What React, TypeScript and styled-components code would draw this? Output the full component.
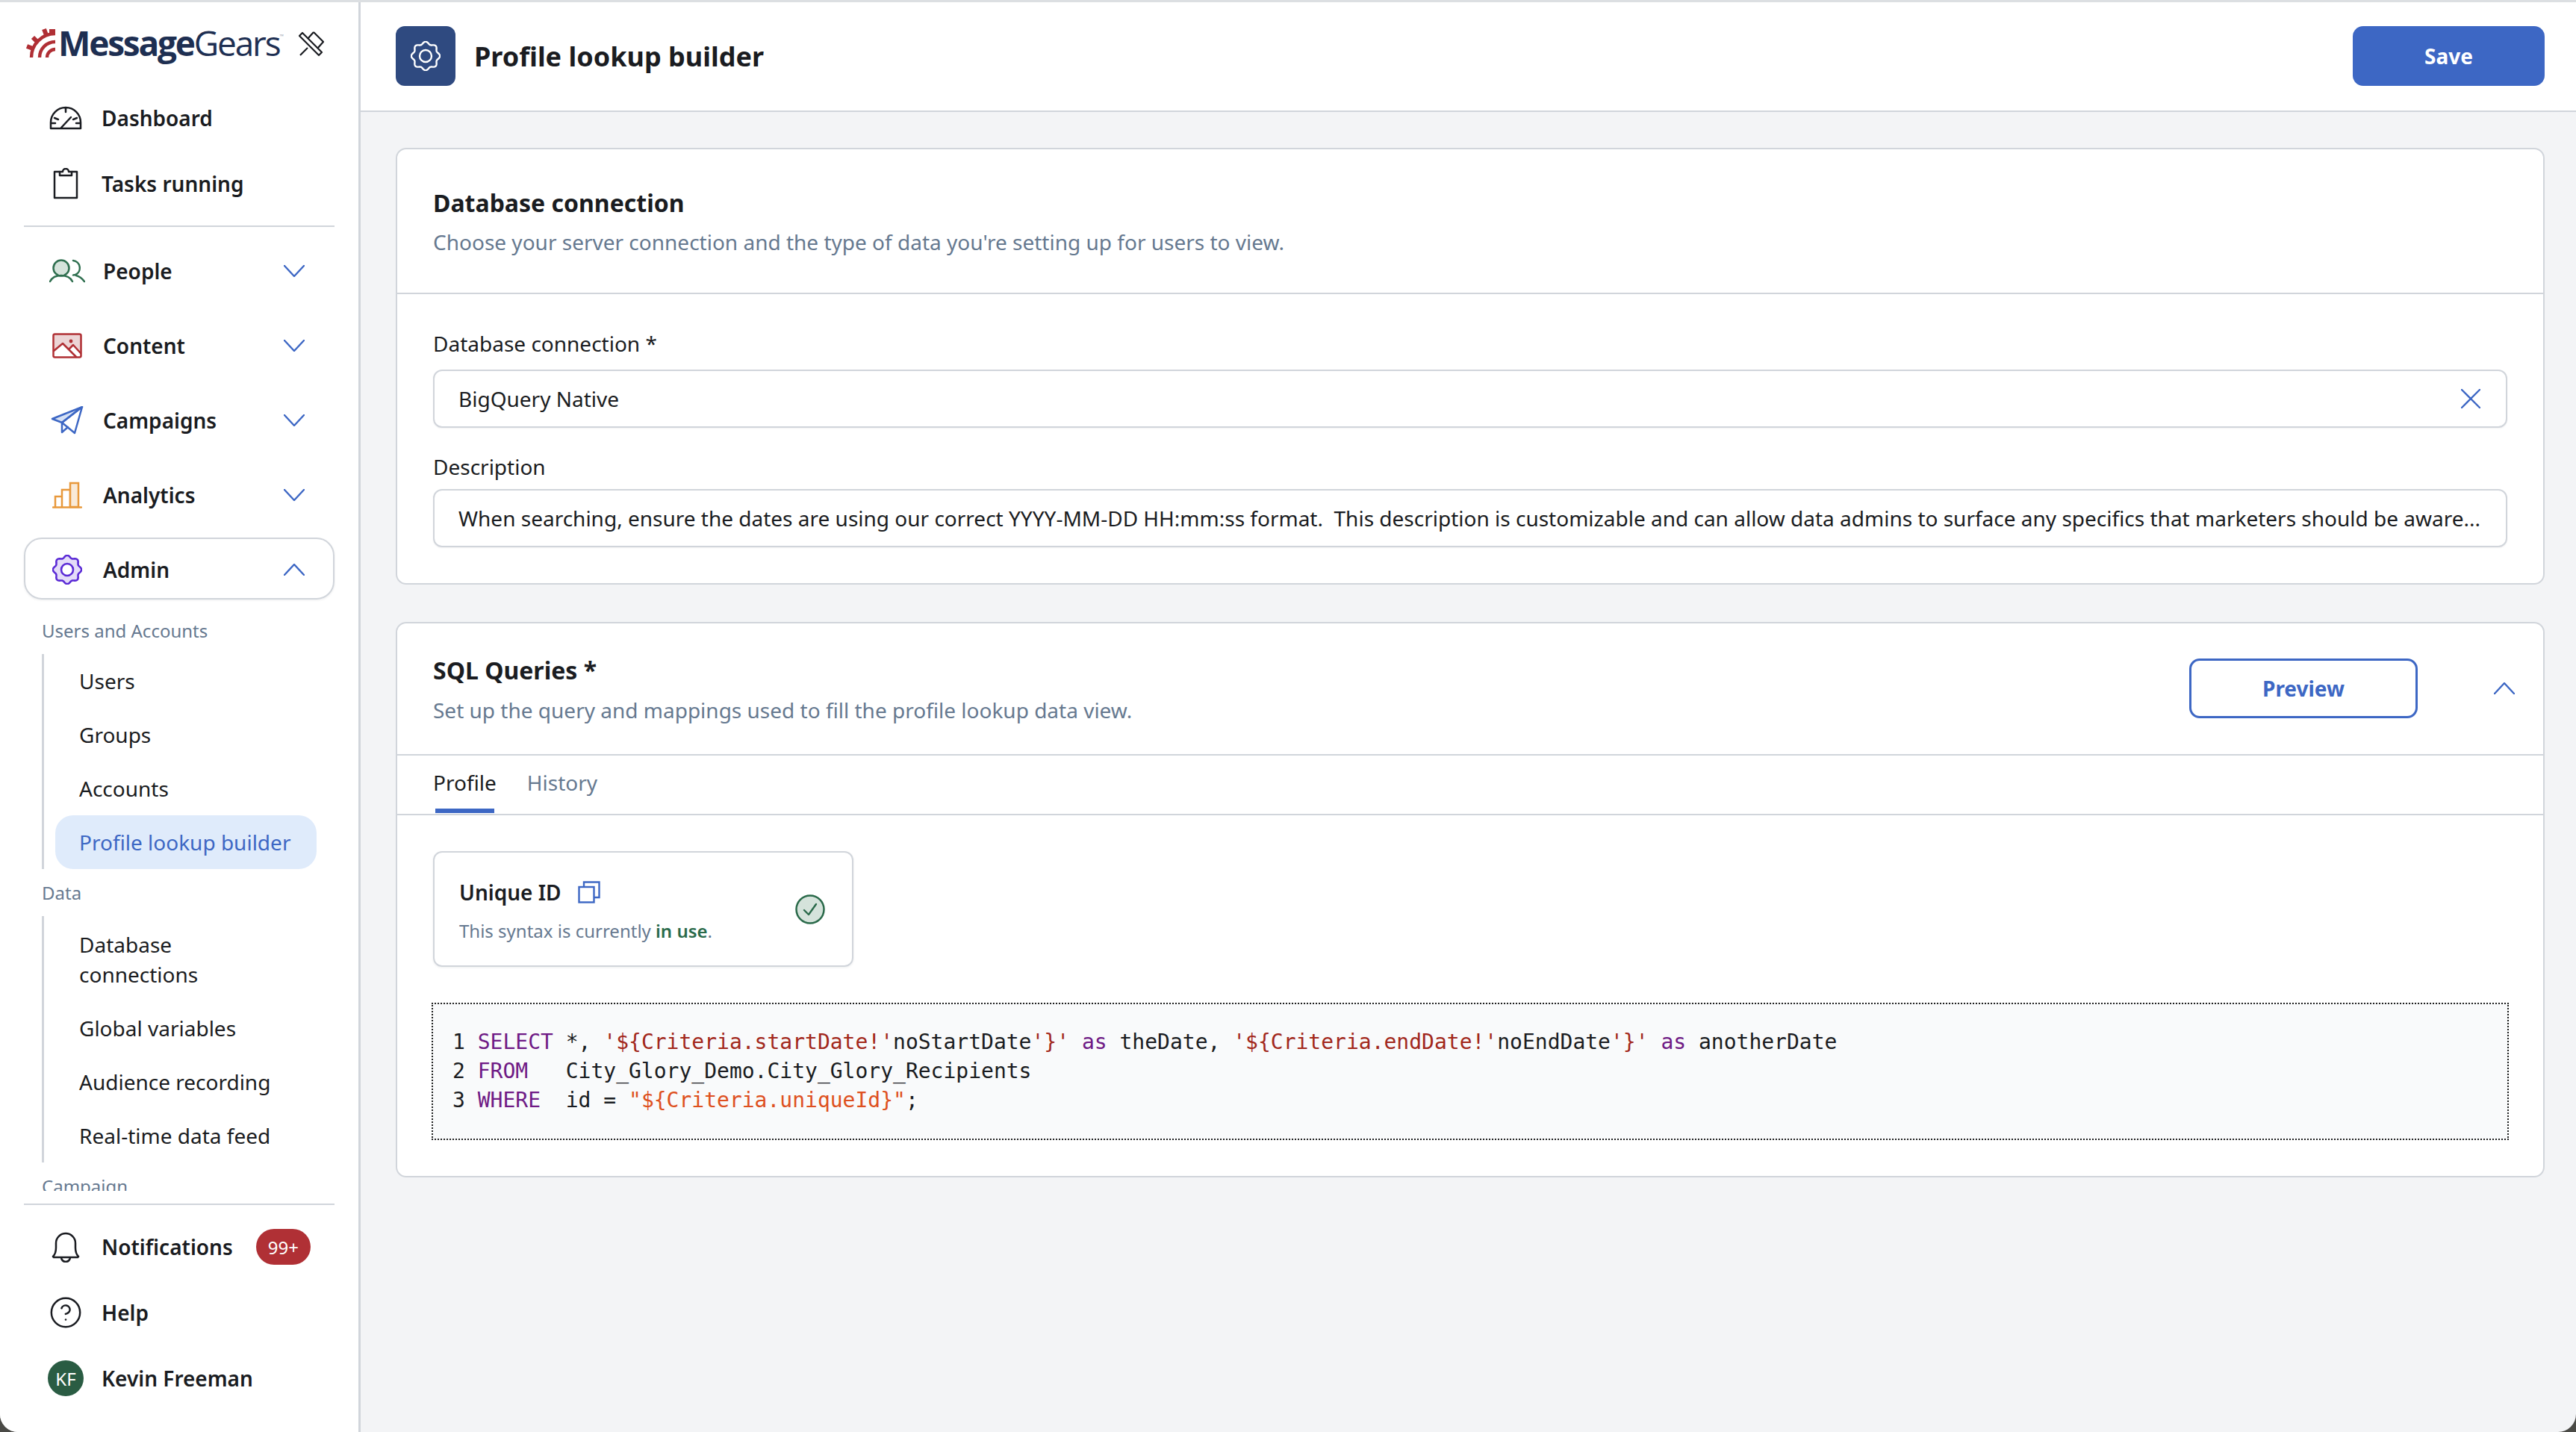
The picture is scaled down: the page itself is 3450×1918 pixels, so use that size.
import React from "react";
import styled, { createGlobalStyle } from "styled-components";
import { CircleHelp } from "lucide-react";

const GlobalStyle = createGlobalStyle`
    html, body {
        margin: 0;
        padding: 0;
        background: #4a4a46;
        overflow: hidden;
    }
    * {
        box-sizing: border-box;
    }
`;

const Page = styled.div`
    display: flex;
    width: 3450px;
    height: 1918px;
    font-family: "Noto Sans", sans-serif;
    color: #1a1c21;
    background: #f3f4f6;
    border-top: 3px solid #dcdfe2;
    border-bottom-left-radius: 24px;
    border-bottom-right-radius: 24px;
    overflow: hidden;
`;

// sidebar
const Sidebar = styled.aside`
    display: flex;
    flex-direction: column;
    flex: 0 0 483px;
    height: 100%;
    background: #fff;
    border-right: 3px solid #d1d5db;
`;
const LogoRow = styled.div`
    display: flex;
    align-items: center;
    height: 111px;
    padding: 0 0 4px 32px;
`;
const LogoText = styled.div`
    margin-left: 4px;
    font-family: "Open Sans", sans-serif;
    font-size: 46px;
    line-height: 50px;
    letter-spacing: -2.2px;
    color: #1e2f52;
    white-space: nowrap;
`;
const LogoStrong = styled.span`
    font-weight: 700;
`;
const LogoMark = styled.sup`
    font-size: 7px;
    letter-spacing: 0;
    color: #9aa3b2;
    vertical-align: 24px;
    line-height: 0;
`;
const PinButton = styled.div`
    display: flex;
    margin-left: 20px;
    margin-top: 4px;
`;
const PlainRow = styled.div`
    display: flex;
    align-items: center;
    gap: 24px;
    height: 88px;
    padding-left: 64px;
    font-size: 28px;
    font-weight: 600;
`;
const RowStack = styled.div`
    display: flex;
    flex-direction: column;
`;
const IconSlot = styled.span`
    display: flex;
    align-items: center;
    justify-content: center;
    flex: 0 0 48px;
    width: 48px;
    height: 48px;
`;
const Divider = styled.div<{ $top: number }>`
    flex: none;
    height: 2px;
    margin: ${({ $top }) => $top}px 32px 0;
    background: #d1d5db;
`;
const Groups = styled.div`
    display: flex;
    flex-direction: column;
    gap: 20px;
    margin-top: 19px;
`;
const Group = styled.div<{ $open?: boolean }>`
    display: flex;
    align-items: center;
    gap: 24px;
    height: ${({ $open }) => ($open ? "83px" : "80px")};
    margin: ${({ $open }) => ($open ? "-3px 32px 0" : "0 32px")};
    padding: ${({ $open }) => ($open ? "3px 38px 0 32px" : "0 40px 0 34px")};
    font-size: 28px;
    font-weight: 600;
    border: ${({ $open }) => ($open ? "2px solid #d1d5db" : "none")};
    border-radius: 24px;
    box-shadow: ${({ $open }) => ($open ? "0 1px 3px rgba(16, 24, 40, 0.08)" : "none")};
`;
const GroupLabel = styled.span`
    flex: 1;
`;
const Scroller = styled.div`
    flex: 0 0 792px;
    height: 792px;
    overflow: hidden;
`;
const SectionLabel = styled.div<{ $top: number }>`
    margin: ${({ $top }) => $top}px 0 0 56px;
    font-size: 24px;
    line-height: 34px;
    color: #667990;
`;
const Tree = styled.div`
    display: flex;
    flex-direction: column;
    margin: 14px 0 0 56px;
    padding-left: 15px;
    border-left: 3px solid #d1d5db;
`;
const TreeItem = styled.div<{ $active?: boolean; $wrap?: boolean }>`
    width: 350px;
    padding: ${({ $wrap }) => ($wrap ? "18px 90px 16px 32px" : "16px 32px")};
    font-size: 28px;
    line-height: 40px;
    border-radius: 24px;
    color: ${({ $active }) => ($active ? "#3d67c4" : "#1a1c21")};
    background: ${({ $active }) => ($active ? "#dfebfb" : "transparent")};
`;
const Badge = styled.span`
    display: flex;
    align-items: center;
    justify-content: center;
    width: 73px;
    height: 48px;
    margin-left: 7px;
    font-size: 24px;
    font-weight: 400;
    color: #fff;
    background: #b03035;
    border-radius: 24px;
`;
const Avatar = styled.span`
    display: flex;
    align-items: center;
    justify-content: center;
    width: 48px;
    height: 48px;
    font-size: 24px;
    font-weight: 400;
    color: #fff;
    background: #2a5c43;
    border-radius: 50%;
`;
const BottomNav = styled(RowStack)`
    margin-top: 12px;
`;

// main column
const Main = styled.main`
    display: flex;
    flex-direction: column;
    flex: 1;
    min-width: 0;
`;
const Header = styled.header`
    display: flex;
    align-items: center;
    flex: 0 0 147px;
    padding: 0 42px 2px 47px;
    background: #fff;
    border-bottom: 2px solid #d1d5db;
`;
const HeaderIcon = styled.div`
    display: flex;
    align-items: center;
    justify-content: center;
    width: 80px;
    height: 80px;
    background: #2f4a80;
    border-radius: 12px;
`;
const PageTitle = styled.h1`
    flex: 1;
    margin: 2px 0 0 25px;
    font-size: 36px;
    font-weight: 700;
    line-height: 48px;
`;
const SaveButton = styled.button`
    width: 257px;
    height: 80px;
    font-family: inherit;
    font-size: 28px;
    font-weight: 700;
    color: #fff;
    background: #3d67c4;
    border: none;
    border-radius: 14px;
`;
const PreviewButton = styled(SaveButton)`
    width: 306px;
    color: #3d67c4;
    background: #fff;
    border: 3px solid #3d67c4;
`;
const Content = styled.div`
    display: flex;
    flex-direction: column;
    gap: 50px;
    padding: 48px 42px 0 47px;
`;
const Card = styled.section`
    background: #fff;
    border: 2px solid #d1d5db;
    border-radius: 14px;
`;
const CardHead = styled.div<{ $pad: string }>`
    display: flex;
    align-items: center;
    padding: ${({ $pad }) => $pad};
    border-bottom: 2px solid #d1d5db;
`;
const CardHeadText = styled.div`
    flex: 1;
`;
const CardTitle = styled.h2`
    margin: 0;
    font-size: 32px;
    font-weight: 700;
    line-height: 44px;
`;
const CardSub = styled.p<{ $gap: number }>`
    margin: ${({ $gap }) => $gap}px 0 0;
    font-size: 28px;
    line-height: 38px;
    color: #667990;
`;
const HeadActions = styled.div`
    display: flex;
    align-items: center;
    gap: 102px;
    margin-top: -2px;
`;
const FormBody = styled.div`
    padding: 47px 48px 48px 48px;
`;
const FieldLabel = styled.label<{ $top?: number }>`
    display: block;
    margin-top: ${({ $top }) => $top ?? 0}px;
    font-size: 28px;
    line-height: 38px;
`;
const InputBox = styled.div<{ $top: number }>`
    display: flex;
    align-items: center;
    justify-content: space-between;
    height: 78px;
    margin-top: ${({ $top }) => $top}px;
    padding: 0 34px 0 32px;
    font-size: 28px;
    white-space: pre;
    overflow: hidden;
    background: #fff;
    border: 2px solid #d1d5db;
    border-radius: 12px;
    box-shadow: 0 1px 2px rgba(16, 24, 40, 0.06);
`;
const Tabs = styled.div`
    display: flex;
    gap: 41px;
    height: 80px;
    padding-left: 48px;
    border-bottom: 2px solid #d1d5db;
`;
const Tab = styled.div<{ $active?: boolean }>`
    position: relative;
    font-size: 28px;
    line-height: 72px;
    color: ${({ $active }) => ($active ? "#1a1c21" : "#667990")};
    &::after {
        content: "";
        display: ${({ $active }) => ($active ? "block" : "none")};
        position: absolute;
        left: 3px;
        right: 3px;
        bottom: 1px;
        height: 6px;
        background: #3d67c4;
    }
`;
const QueryBody = styled.div`
    padding: 48px 46px 48px 48px;
`;
const SyntaxCard = styled.div`
    display: flex;
    align-items: center;
    justify-content: space-between;
    width: 563px;
    height: 155px;
    padding: 0 36px 0 33px;
    border: 2px solid #d1d5db;
    border-radius: 12px;
    box-shadow: 0 1px 3px rgba(16, 24, 40, 0.08);
`;
const SyntaxText = styled.div`
    margin-top: 4px;
`;
const SyntaxTitle = styled.div`
    display: flex;
    align-items: center;
    gap: 22px;
    font-size: 28px;
    font-weight: 600;
    line-height: 38px;
`;
const SyntaxNote = styled.div`
    margin-top: 16px;
    font-size: 24px;
    line-height: 34px;
    color: #667990;
`;
const InUse = styled.span`
    font-weight: 600;
    color: #2a6a4a;
`;
const CodeBox = styled.pre`
    height: 184px;
    margin: 48px 0 0 -2px;
    padding: 31px 26px;
    font-family: "DejaVu Sans Mono", monospace;
    font-size: 28px;
    line-height: 39px;
    color: #1a1c21;
    background: #f9fafb;
    border: 2px dotted #222;
`;
const Kw = styled.span`
    color: #6f1a85;
`;
const Str = styled.span`
    color: #a2281c;
`;
const Dq = styled.span`
    color: #de5020;
`;

// icons
const gearPath = (c: number, mean: number, amp: number, lobes: number) => {
    const pts: string[] = [];
    for (let i = 0; i < 144; i++) {
        const t = (i / 144) * Math.PI * 2;
        const r = mean + amp * Math.cos(lobes * t);
        pts.push(`${(c + r * Math.sin(t)).toFixed(2)} ${(c - r * Math.cos(t)).toFixed(2)}`);
    }
    return `M${pts.join("L")}Z`;
};

const Gear = ({ size, stroke, fill, hole, width }: { size: number; stroke: string; fill: string; hole: string; width: number }) => {
    const c = size / 2;
    return (
        <svg width={size} height={size} viewBox={`0 0 ${size} ${size}`}>
            <path d={gearPath(c, size * 0.44, size * 0.04, 8)} fill={fill} stroke={stroke} strokeWidth={width} strokeLinejoin="round" />
            <circle cx={c} cy={c} r={size * 0.2} fill={hole} stroke={stroke} strokeWidth={width} />
        </svg>
    );
};

const Chevron = ({ up, width = 28 }: { up?: boolean; width?: number }) => (
    <svg width={width} height={16} viewBox="0 0 28 16" fill="none" stroke="#3d67c4" strokeWidth="2.4" strokeLinecap="round" strokeLinejoin="round">
        <path d={up ? "M1 15 14 1l13 14" : "M1 1l13 14L27 1"} />
    </svg>
);

const Logo = () => (
    <svg width="42" height="42" viewBox="0 0 42 42" fill="none" stroke="#b02f35" strokeWidth="4.4">
        <path d="M42 30a11 11 0 0 0-11 11" />
        <path d="M42 20a21 21 0 0 0-21 21" />
        <path d="M42 9a32 32 0 0 0-32 32" />
        <path d="M27 3l3 8M12 14l6 6M4 26l8 3M34 6l8 0" strokeWidth="6" />
    </svg>
);

const PinOff = () => (
    <svg width="34" height="34" viewBox="0 0 34 34" fill="none" stroke="#1a1c21" strokeWidth="2.2" strokeLinejoin="round">
        <path d="M20 1l13 13-8 9M20 1l-8 9" />
        <path d="M1 6l4-4 26 26-4 4zM12 22L2 32" />
    </svg>
);

const DashboardIcon = () => (
    <svg width="44" height="32" viewBox="0 0 44 32" fill="none" stroke="#1a1c21" strokeWidth="2.5" strokeLinecap="round" strokeLinejoin="round">
        <path d="M2 30v-8a20 20 0 0 1 40 0v8zM22 2v6M7 16l5 2M37 16l-5 2M2 23h6M36 23h6M16 29l13-14" />
    </svg>
);

const ClipboardIcon = () => (
    <svg width="34" height="42" viewBox="0 0 34 42" fill="none" stroke="#1a1c21" strokeWidth="2.5" strokeLinejoin="round">
        <path d="M9 5H2v35h30V5h-7" />
        <path d="M9 10V5h4a4 4 0 0 1 8 0h4v5z" />
    </svg>
);

const PeopleIcon = () => (
    <svg width="48" height="32" viewBox="0 0 48 32" fill="none" stroke="#2f6f4f" strokeWidth="2.5" strokeLinecap="round">
        <circle cx="16" cy="12" r="10.5" fill="#d5e3db" />
        <path d="M1 30c3-6 8-8 15-8s12 2 15 8" />
        <path d="M32 2a10 10 0 0 1 3 19c-1 0-2 0-3 .5M36 22c4 1 8 4 11 8" />
    </svg>
);

const ContentIcon = () => (
    <svg width="40" height="34" viewBox="0 0 40 34" strokeWidth="2.5" strokeLinejoin="round" strokeLinecap="round">
        <rect x="1.5" y="1.5" width="37" height="31" rx="2" fill="#ecd5d6" stroke="none" />
        <path d="M2 24l12-10 17 18H2zM22 21l6-5 10 11v5h-7z" fill="#fff" stroke="none" />
        <rect x="1.5" y="1.5" width="37" height="31" rx="2" fill="none" stroke="#b03035" />
        <path d="M2 24l12-10 18 18M22 22l6-6 10 11" fill="none" stroke="#b03035" />
        <circle cx="25" cy="11" r="2.4" fill="#b03035" />
    </svg>
);

const PlaneIcon = () => (
    <svg width="44" height="38" viewBox="0 0 44 38" strokeWidth="2.5" strokeLinejoin="round" strokeLinecap="round" stroke="#3d67c4">
        <path d="M42 1L2 17l13 5z" fill="#d6e1f5" />
        <path d="M42 1L32 36 15 22zM15 22v13l8-7" fill="none" />
    </svg>
);

const BarsIcon = () => (
    <svg width="40" height="36" viewBox="0 0 40 36" stroke="#e8993c" strokeWidth="2.5" fill="none" strokeLinecap="round">
        <path d="M1 34.5h38" />
        <path d="M4 34V20h9v14M13 20v-9h11v23" />
        <rect x="24" y="2" width="11" height="32" fill="#f9ead8" />
    </svg>
);

const BellIcon = () => (
    <svg width="38" height="42" viewBox="0 0 38 42" fill="none" stroke="#1a1c21" strokeWidth="2.5" strokeLinejoin="round">
        <path d="M2 34c3-3 4-6 4-12v-6a13 13 0 0 1 26 0v6c0 6 1 9 4 12l-1 1H3zM13 35a6 6 0 0 0 12 0" />
    </svg>
);

const CloseIcon = () => (
    <svg width="26" height="26" viewBox="0 0 26 26" fill="none" stroke="#3d67c4" strokeWidth="2.4" strokeLinecap="round">
        <path d="M1 1l24 24M25 1L1 25" />
    </svg>
);

const CopyIcon = () => (
    <svg width="30" height="30" viewBox="0 0 30 30" fill="none" stroke="#3d67c4" strokeWidth="2.4">
        <path d="M8 8V1.5h20.5V22H21" />
        <rect x="1.5" y="8" width="20" height="20.5" />
    </svg>
);

const CheckCircle = () => (
    <svg width="40" height="40" viewBox="0 0 40 40">
        <circle cx="20" cy="20" r="18.5" fill="#d5e3db" stroke="#2a6a4a" strokeWidth="2.5" />
        <path d="M12 21l6 6 10-14" fill="none" stroke="#2a6a4a" strokeWidth="2.4" strokeLinecap="round" strokeLinejoin="round" />
    </svg>
);

const NavGroup = ({ icon, label }: { icon: React.ReactNode; label: string }) => (
    <Group>
        <IconSlot>{icon}</IconSlot>
        <GroupLabel>{label}</GroupLabel>
        <Chevron />
    </Group>
);

export default function App() {
    return (
        <>
            <GlobalStyle />
            <Page>
                <Sidebar>
                    <LogoRow>
                        <Logo />
                        <LogoText>
                            <LogoStrong>Message</LogoStrong>Gears<LogoMark>™</LogoMark>
                        </LogoText>
                        <PinButton>
                            <PinOff />
                        </PinButton>
                    </LogoRow>
                    <RowStack>
                        <PlainRow>
                            <IconSlot><DashboardIcon /></IconSlot>
                            Dashboard
                        </PlainRow>
                        <PlainRow>
                            <IconSlot><ClipboardIcon /></IconSlot>
                            Tasks running
                        </PlainRow>
                    </RowStack>
                    <Divider $top={12} />
                    <Groups>
                        <NavGroup icon={<PeopleIcon />} label="People" />
                        <NavGroup icon={<ContentIcon />} label="Content" />
                        <NavGroup icon={<PlaneIcon />} label="Campaigns" />
                        <NavGroup icon={<BarsIcon />} label="Analytics" />
                        <Group $open>
                            <IconSlot>
                                <Gear size={40} stroke="#5b2bd6" fill="#e4dcf8" hole="#fff" width={2.6} />
                            </IconSlot>
                            <GroupLabel>Admin</GroupLabel>
                            <Chevron up />
                        </Group>
                    </Groups>
                    <Scroller>
                        <SectionLabel $top={25}>Users and Accounts</SectionLabel>
                        <Tree>
                            <TreeItem>Users</TreeItem>
                            <TreeItem>Groups</TreeItem>
                            <TreeItem>Accounts</TreeItem>
                            <TreeItem $active>Profile lookup builder</TreeItem>
                        </Tree>
                        <SectionLabel $top={15}>Data</SectionLabel>
                        <Tree>
                            <TreeItem $wrap>Database connections</TreeItem>
                            <TreeItem>Global variables</TreeItem>
                            <TreeItem>Audience recording</TreeItem>
                            <TreeItem>Real-time data feed</TreeItem>
                        </Tree>
                        <SectionLabel $top={15}>Campaign</SectionLabel>
                    </Scroller>
                    <Divider $top={17} />
                    <BottomNav>
                        <PlainRow>
                            <IconSlot><BellIcon /></IconSlot>
                            Notifications
                            <Badge>99+</Badge>
                        </PlainRow>
                        <PlainRow>
                            <IconSlot><CircleHelp size={46} strokeWidth={1.3} color="#1a1c21" /></IconSlot>
                            Help
                        </PlainRow>
                        <PlainRow>
                            <Avatar>KF</Avatar>
                            Kevin Freeman
                        </PlainRow>
                    </BottomNav>
                </Sidebar>
                <Main>
                    <Header>
                        <HeaderIcon>
                            <Gear size={40} stroke="#fff" fill="none" hole="none" width={2.4} />
                        </HeaderIcon>
                        <PageTitle>Profile lookup builder</PageTitle>
                        <SaveButton>Save</SaveButton>
                    </Header>
                    <Content>
                        <Card>
                            <CardHead $pad="50px 48px 49px">
                                <CardHeadText>
                                    <CardTitle>Database connection</CardTitle>
                                    <CardSub $gap={11}>Choose your server connection and the type of data you're setting up for users to view.</CardSub>
                                </CardHeadText>
                            </CardHead>
                            <FormBody>
                                <FieldLabel>Database connection *</FieldLabel>
                                <InputBox $top={16}>
                                    BigQuery Native
                                    <CloseIcon />
                                </InputBox>
                                <FieldLabel $top={33}>Description</FieldLabel>
                                <InputBox $top={11}>
                                    When searching, ensure the dates are using our correct YYYY-MM-DD HH:mm:ss format.  This description is customizable and can allow data admins to surface any specifics that marketers should be aware...
                                </InputBox>
                            </FormBody>
                        </Card>
                        <Card>
                            <CardHead $pad="41px 38px 40px 48px">
                                <CardHeadText>
                                    <CardTitle>SQL Queries *</CardTitle>
                                    <CardSub $gap={12}>Set up the query and mappings used to fill the profile lookup data view.</CardSub>
                                </CardHeadText>
                                <HeadActions>
                                    <PreviewButton>Preview</PreviewButton>
                                    <Chevron up />
                                </HeadActions>
                            </CardHead>
                            <Tabs>
                                <Tab $active>Profile</Tab>
                                <Tab>History</Tab>
                            </Tabs>
                            <QueryBody>
                                <SyntaxCard>
                                    <SyntaxText>
                                        <SyntaxTitle>
                                            Unique ID
                                            <CopyIcon />
                                        </SyntaxTitle>
                                        <SyntaxNote>
                                            This syntax is currently <InUse>in use</InUse>.
                                        </SyntaxNote>
                                    </SyntaxText>
                                    <CheckCircle />
                                </SyntaxCard>
                                <CodeBox>
                                    {"1 "}<Kw>SELECT</Kw>{" *, "}<Str>{"'${Criteria.startDate!'"}</Str>{"noStartDate"}<Str>{"'}'"}</Str>{" "}<Kw>as</Kw>{" theDate, "}<Str>{"'${Criteria.endDate!'"}</Str>{"noEndDate"}<Str>{"'}'"}</Str>{" "}<Kw>as</Kw>{" anotherDate\n"}
                                    {"2 "}<Kw>FROM</Kw>{"   City_Glory_Demo.City_Glory_Recipients\n"}
                                    {"3 "}<Kw>WHERE</Kw>{"  id = "}<Dq>{'"${Criteria.uniqueId}"'}</Dq>{";"}
                                </CodeBox>
                            </QueryBody>
                        </Card>
                    </Content>
                </Main>
            </Page>
        </>
    );
}
